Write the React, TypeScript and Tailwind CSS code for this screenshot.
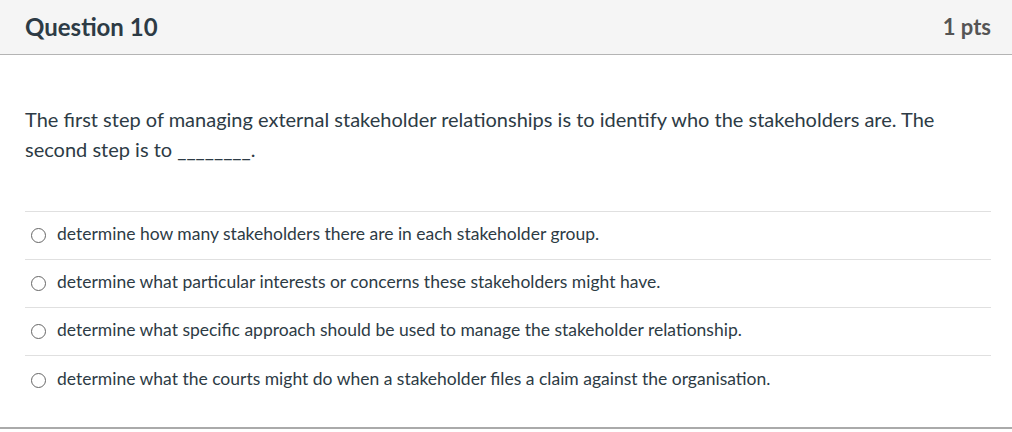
const answers = [
  "determine how many stakeholders there are in each stakeholder group.",
  "determine what particular interests or concerns these stakeholders might have.",
  "determine what specific approach should be used to manage the stakeholder relationship.",
  "determine what the courts might do when a stakeholder files a claim against the organisation.",
];

const App = () => {
  return (
    <div className="w-[1012px] h-[432px] bg-white font-['Lato','Noto_Sans',sans-serif] text-[#2d3b45]">
      <div className="h-[55px] bg-[#f5f5f5] border-b border-[#b4b4b4] flex items-center justify-between pl-[25px] pr-[21px]">
        <h2 className="text-[24px] font-bold leading-none">Question 10</h2>
        <div className="text-[22px] font-bold text-[#555] leading-none">1 pts</div>
      </div>

      <div className="pl-[25px] pr-[21px]">
        <p className="pt-[49px] text-[20px] leading-[30px]">
          The first step of managing external stakeholder relationships is to identify who the stakeholders are. The
          <br />
          second step is to ________.
        </p>

        <div className="mt-[47px] border-t border-[#e0e0e0]">
          {answers.map((a) => (
            <label key={a} className="flex items-center h-[48px] border-b border-[#e0e0e0] last:border-b-0">
              <span className="w-[15px] h-[15px] ml-[6px] mr-[11px] rounded-full border border-[#666] bg-white" />
              <span className="text-[17.5px] -mt-[2px]">{a}</span>
            </label>
          ))}
        </div>
      </div>

      <div className="mt-[23px] border-b-2 border-[#aaa]" />
    </div>
  );
};

export default App;
